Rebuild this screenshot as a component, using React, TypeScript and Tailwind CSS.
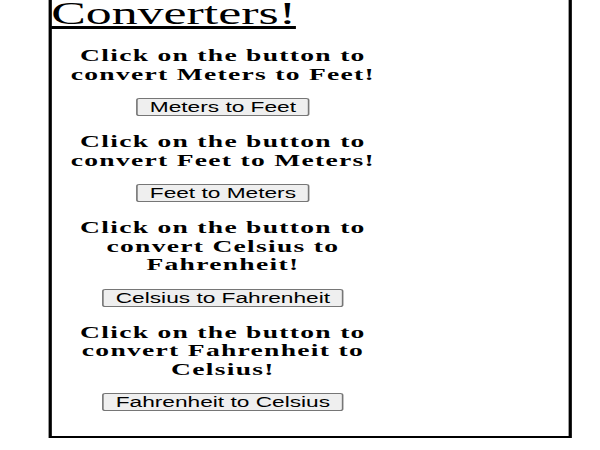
const converters = [
  { text: "Click on the button to convert Meters to Feet!", label: "Meters to Feet" },
  { text: "Click on the button to convert Feet to Meters!", label: "Feet to Meters" },
  { text: "Click on the button to convert Celsius to Fahrenheit!", label: "Celsius to Fahrenheit" },
  { text: "Click on the button to convert Fahrenheit to Celsius!", label: "Fahrenheit to Celsius" },
];

export default function App() {
  return (
    <div className="h-[450px] overflow-hidden bg-white">
      <div className="w-[370px] origin-top-left scale-x-[1.62] text-black [font-family:'Liberation_Serif',serif]">
        <div className="-mt-[7px] ml-[29.6px] w-[323px] border-2 border-black pb-[8px]">
          <h1 className="text-[32px] leading-[36px] underline">Converters!</h1>
          <div className="mt-[16px] flex w-[212px] flex-col">
            {converters.map((c) => (
              <section key={c.label} className="mb-[17px] flex flex-col items-center">
                <h3 className="w-full text-center text-[17px] font-bold leading-[18.5px] tracking-[0.8px]">
                  {c.text}
                </h3>
                <button
                  type="button"
                  className="mt-[14px] h-[18px] rounded-[2px] border border-[#767676] bg-[#efefef] px-[7px] text-[14px] leading-[16px] text-black [font-family:'Liberation_Sans',Arial,sans-serif]"
                >
                  {c.label}
                </button>
              </section>
            ))}
          </div>
        </div>
      </div>
    </div>
  );
}
